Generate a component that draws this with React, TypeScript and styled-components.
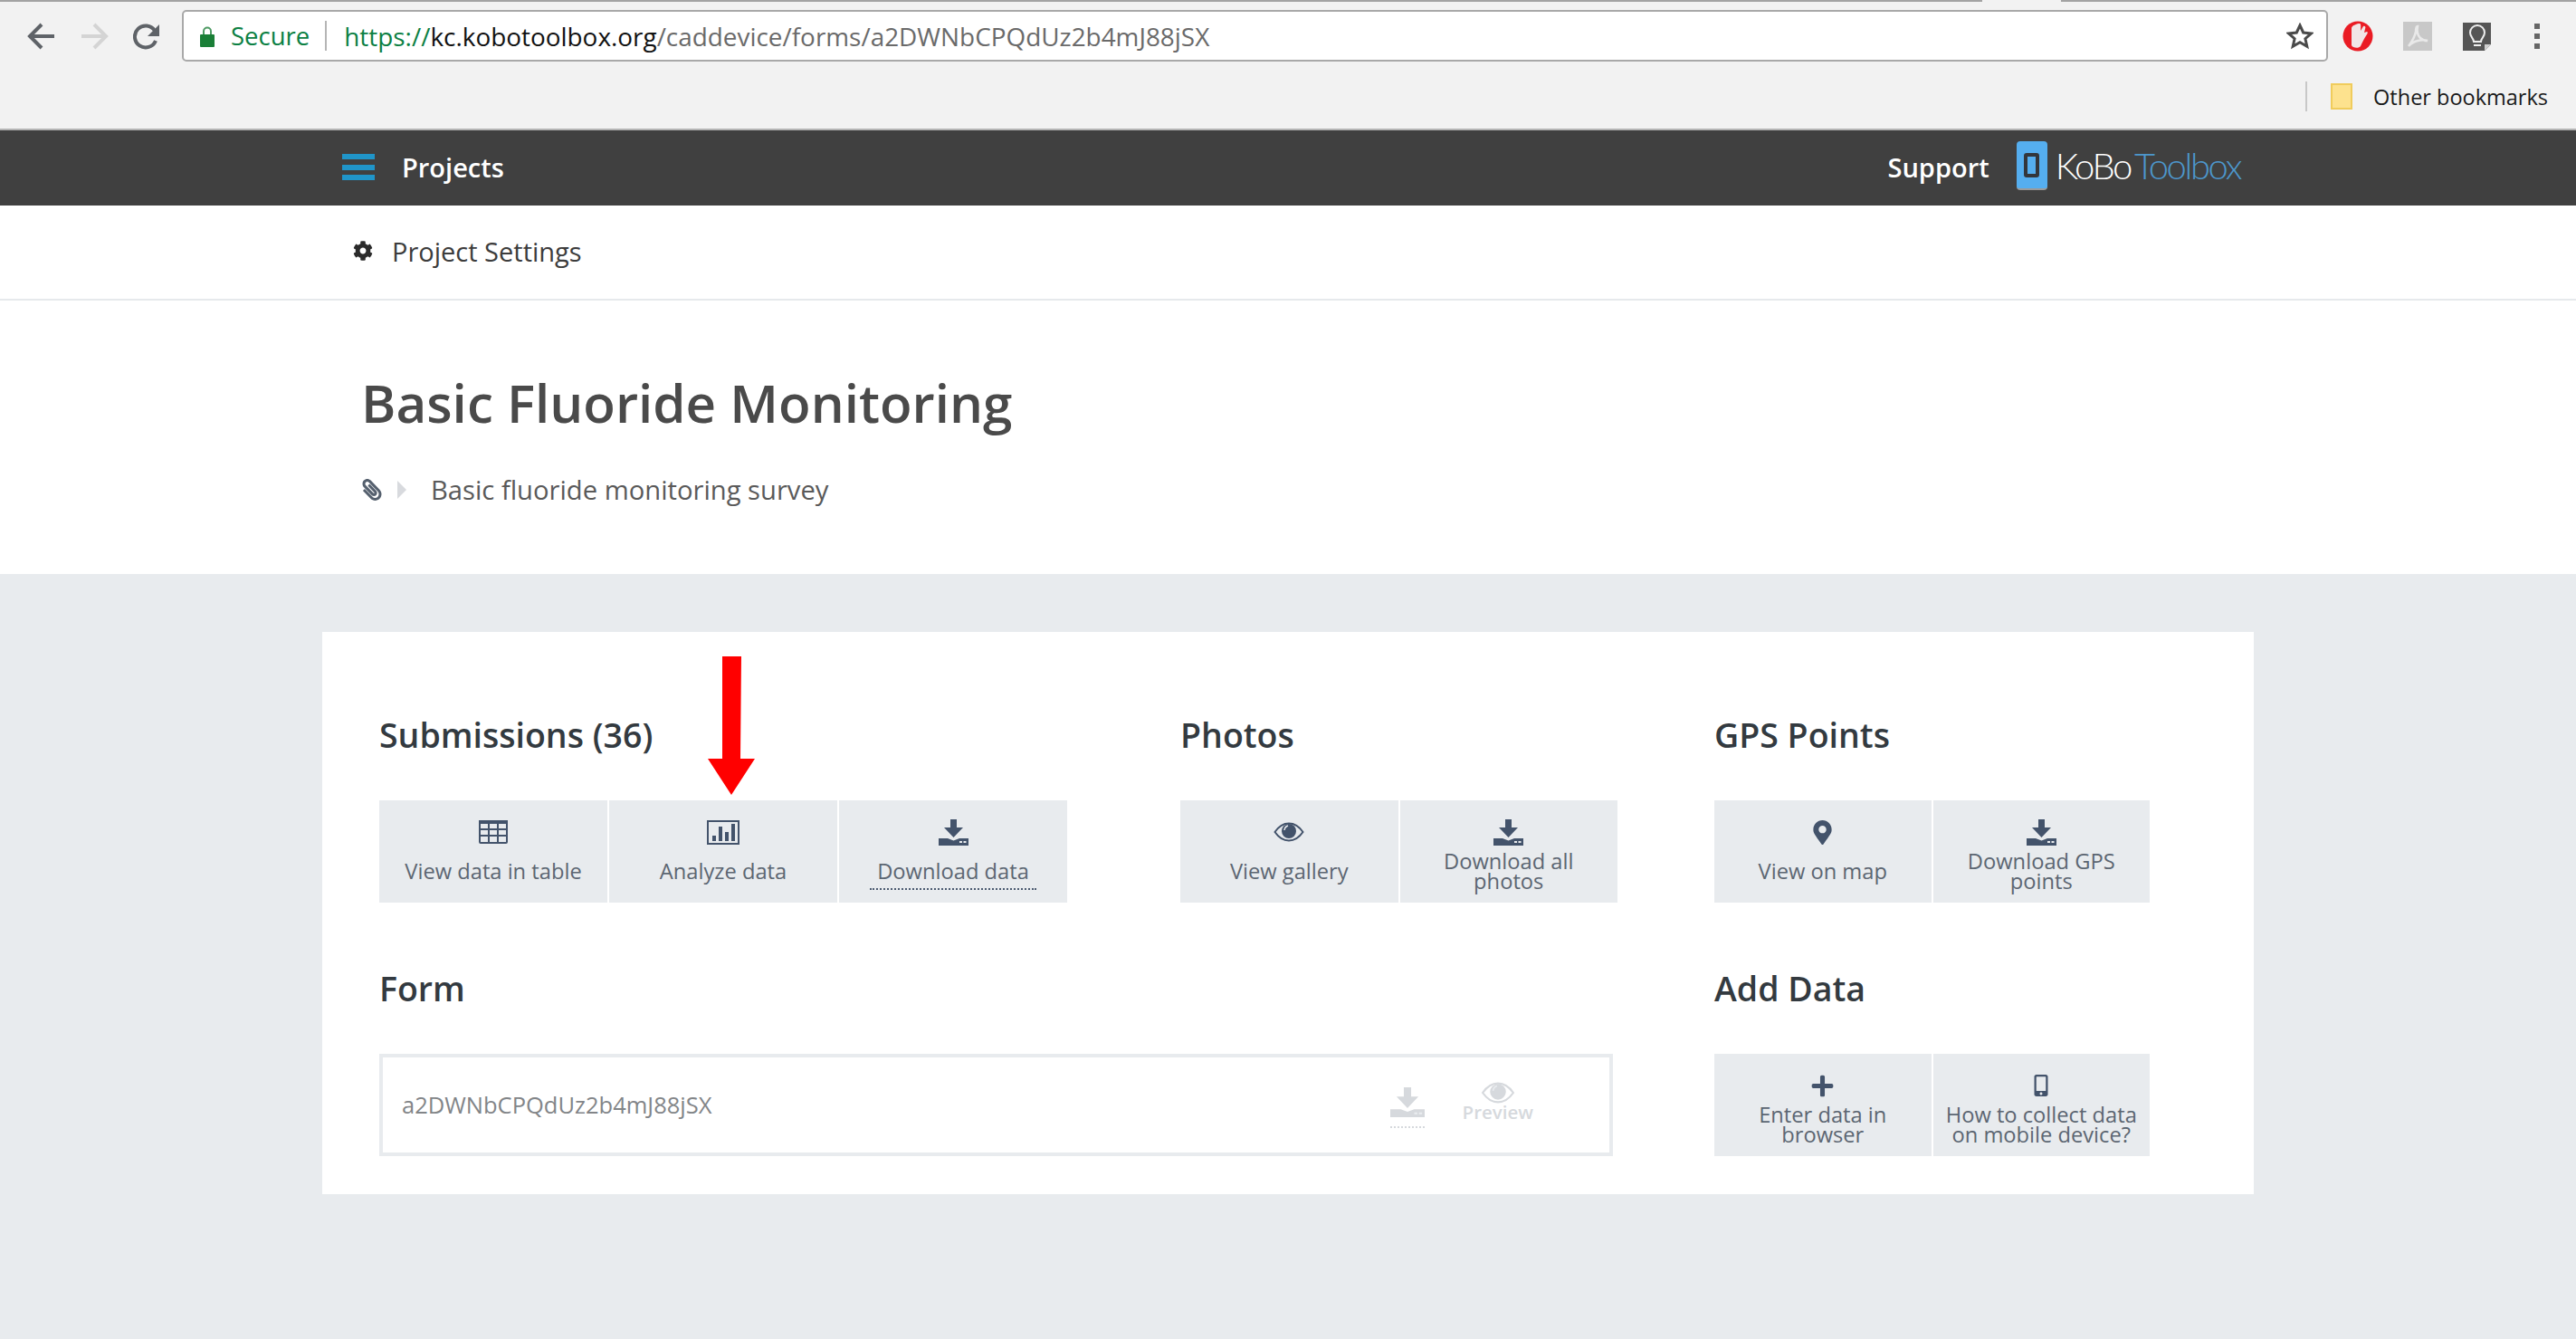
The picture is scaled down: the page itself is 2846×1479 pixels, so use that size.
import React from "react";
import styled, { createGlobalStyle } from "styled-components";
import { FaCog, FaPaperclip, FaPlus, FaMapMarkerAlt, FaMobileAlt } from "react-icons/fa";

const GlobalStyle = createGlobalStyle`
    html, body {
        margin: 0;
        padding: 0;
        background: #e8ebee;
    }
    body {
        font-family: "Open Sans", "Noto Sans", sans-serif;
    }
    * {
        box-sizing: border-box;
    }
`;

const Page = styled.div`
    width: 2846px;
    height: 1479px;
    overflow: hidden;
    display: flex;
    flex-direction: column;
    background-color: #e8ebee;
`;

/* browser chrome */
const Chrome = styled.div`
    background-color: #f2f2f2;
    border-bottom: 2px solid #b4b4b4;
    height: 144px;
`;

const TabStrip = styled.div`
    height: 2px;
    display: flex;
    background-color: #a3a3a3;
`;

const TabGap = styled.div`
    width: 87px;
    margin-left: 2190px;
    background-color: #f2f2f2;
`;

const Toolbar = styled.div`
    display: flex;
    align-items: flex-start;
    padding: 9px 10px 0 15px;
    height: 78px;
`;

const ToolSlot = styled.div<{ $w: number; $flip?: boolean }>`
    width: ${(p) => p.$w}px;
    height: 57px;
    flex: none;
    display: flex;
    align-items: center;
    justify-content: center;
    ${(p) => p.$flip && "transform: scaleX(-1);"}
`;

const UrlBox = styled.div`
    flex: 1;
    height: 57px;
    margin-left: 12px;
    display: flex;
    align-items: center;
    padding: 0 14px 0 18px;
    background-color: #ffffff;
    border: 2px solid #a9a9a9;
    border-radius: 5px;
    font-size: 27.5px;
    white-space: nowrap;
`;

const Secure = styled.span`
    color: #0b8043;
    margin-left: 18px;
`;

const UrlDivider = styled.div`
    width: 2px;
    height: 33px;
    margin: 0 19px 0 17px;
    background-color: #b5b5b5;
`;

const UrlText = styled.span`
    font-size: 27.9px;
    color: #6a6a6a;
`;

const UrlScheme = styled.span`
    color: #0b8043;
`;

const UrlHost = styled.span`
    color: #111111;
`;

const StarSlot = styled.div`
    margin-left: auto;
    display: flex;
`;

const Bookmarks = styled.div`
    height: 62px;
    display: flex;
    align-items: center;
    justify-content: flex-end;
    padding: 0 31px 9px 0;
    font-size: 23.5px;
    color: #1a1a1a;
`;

const BookmarkDivider = styled.div`
    width: 2px;
    height: 33px;
    background-color: #c8c8c8;
    margin-right: 26px;
`;

const Folder = styled.div`
    width: 24px;
    height: 29px;
    margin-right: 23px;
    background-color: #fde28e;
    border: 2px solid #f0cc5c;
`;

/* kobo nav */
const NavBar = styled.div`
    height: 83px;
    flex: none;
    display: flex;
    align-items: center;
    padding: 0 371px 2px 378px;
    background-color: #404040;
    color: #ffffff;
    font-size: 29px;
    font-weight: 600;
`;

const Hamburger = styled.div`
    width: 36px;
    height: 29px;
    margin-right: 30px;
    display: flex;
    flex-direction: column;
    justify-content: space-between;
`;

const HamburgerBar = styled.div`
    height: 6px;
    background-color: #2095c9;
`;

const SupportLink = styled.span`
    margin-left: auto;
    margin-right: 30px;
`;

const LogoBadge = styled.div`
    width: 34px;
    height: 54px;
    margin: 0 9px 3px 0;
    display: flex;
    align-items: center;
    justify-content: center;
    background-color: #55aeef;
    border-bottom: 2px solid #9a9a9a;
    border-radius: 4px;
`;

const LogoPhone = styled.div`
    width: 17px;
    height: 27px;
    border: 4px solid #33363b;
    border-radius: 3px;
`;

const LogoText = styled.div`
    margin-bottom: 3px;
    font-family: "Lato", sans-serif;
    font-weight: 300;
    font-size: 40px;
    letter-spacing: -2.4px;
    white-space: nowrap;
`;

const LogoAccent = styled.span`
    color: #4d97cc;
    margin-left: 4px;
`;

const SubNav = styled.div`
    height: 105px;
    flex: none;
    display: flex;
    align-items: center;
    padding: 0 0 3px 390px;
    background-color: #ffffff;
    border-bottom: 2px solid #e6e9ec;
    color: #3c3c3c;
    font-size: 29px;
`;

const GearIcon = styled.span`
    display: flex;
    margin-right: 21px;
    color: #2b2b2b;
`;

const Header = styled.div`
    height: 302px;
    flex: none;
    padding: 73px 0 0 399px;
    background-color: #ffffff;
`;

const Title = styled.h1`
    margin: 0;
    font-size: 58.3px;
    line-height: 80px;
    font-weight: 600;
    color: #4a4a4a;
`;

const Description = styled.div`
    display: flex;
    align-items: center;
    margin-top: 36px;
    height: 40px;
    font-size: 29.2px;
    color: #5a5a5a;
`;

const ClipIcon = styled.span`
    display: flex;
    color: #55606e;
    margin-right: 16px;
    transform: scaleX(-1);
`;

const Caret = styled.div`
    width: 0;
    height: 0;
    margin-right: 27px;
    border-style: solid;
    border-width: 10px 0 10px 10px;
    border-color: transparent transparent transparent #d8dade;
`;

/* report card */
const Body = styled.div`
    flex: 1;
    padding: 64px 356px 0 356px;
`;

const Card = styled.div`
    position: relative;
    height: 621px;
    padding: 84px 0 0 63px;
    background-color: #ffffff;
`;

const CardRow = styled.div`
    display: flex;
    margin-bottom: 65px;
`;

const Group = styled.div<{ $w: number; $gap: number }>`
    width: ${(p) => p.$w}px;
    margin-right: ${(p) => p.$gap}px;
    flex: none;
`;

const GroupTitle = styled.h2`
    margin: 0 0 42px 0;
    height: 60px;
    line-height: 60px;
    font-size: 37.5px;
    font-weight: 600;
    color: #333a40;
`;

const ButtonRow = styled.div`
    display: flex;
    gap: 2px;
`;

const ActionButton = styled.div`
    flex: 1;
    height: 113px;
    padding-top: 20px;
    display: flex;
    flex-direction: column;
    align-items: center;
    background-color: #e8ebee;
    color: #43536b;
`;

const IconSlot = styled.div`
    height: 30px;
    display: flex;
    align-items: center;
    justify-content: center;
`;

const LabelBox = styled.div`
    height: 44px;
    margin-top: 6px;
    display: flex;
    align-items: center;
    justify-content: center;
`;

const Label = styled.span<{ $underline?: boolean }>`
    display: block;
    text-align: center;
    font-size: 23.7px;
    line-height: 22px;
    color: #5c6672;
    ${(p) =>
        p.$underline &&
        `
        padding: 0 8px 8px;
        margin-bottom: -10px;
        border-bottom: 2px dotted #4b5a70;
    `}
`;

const FormBox = styled.div`
    height: 113px;
    display: flex;
    align-items: center;
    padding: 0 0 2px 21px;
    border: 4px solid #e8ebee;
    font-size: 25.5px;
    color: #828588;
`;

const FormActions = styled.div`
    margin-left: auto;
    display: flex;
    align-items: flex-start;
    color: #d6d9dd;
`;

const FormDownload = styled.div`
    width: 38px;
    padding-bottom: 10px;
    border-bottom: 2px dotted #d6d9dd;
    display: flex;
    justify-content: center;
    margin-top: 8px;
`;

const FormPreview = styled.div`
    margin: 2px 84px 0 42px;
    display: flex;
    flex-direction: column;
    align-items: center;
    font-size: 20.5px;
    line-height: 18px;
    font-weight: 600;
`;

const RedArrow = styled.svg`
    position: absolute;
    left: 426px;
    top: 27px;
`;

const Icon = styled.svg`
    display: block;
    flex: none;
`;

/* drawn icons */
function TableIcon() {
    return (
        <Icon width="32" height="26" viewBox="0 0 32 26" fill="none" stroke="currentColor" strokeWidth="2">
            <rect x="1" y="1" width="30" height="24" rx="1" />
            <rect x="0" y="0" width="32" height="4" fill="currentColor" stroke="none" />
            <path d="M11 2v22M21 2v22M1 10h30M1 17h30" />
        </Icon>
    );
}

function ChartIcon() {
    return (
        <Icon width="36" height="27" viewBox="0 0 36 27" fill="none">
            <rect x="1" y="1" width="34" height="25" stroke="currentColor" strokeWidth="2" />
            <path fill="currentColor" d="M6 17h4v6H6zM13 7h4v16h-4zM20 13h4v10h-4zM27 4h4v19h-4z" />
        </Icon>
    );
}

function DownloadIcon({ size = 33 }: { size?: number }) {
    return (
        <Icon width={size} height={(size * 29) / 33} viewBox="0 0 33 29" fill="currentColor">
            <path d="M13 0h7v9h7l-10.500 11L6 9h7z" />
            <path d="M0 21h10l6.500 2.500L23 21h10v8H0z" />
            <rect x="23" y="24" width="3" height="2" fill="#e8ebee" />
            <rect x="27.500" y="24" width="3" height="2" fill="#e8ebee" />
        </Icon>
    );
}

function EyeIcon({ w = 34, h = 22 }: { w?: number; h?: number }) {
    return (
        <Icon width={w} height={h} viewBox="0 0 34 22" fill="none">
            <path d="M1.500 11C6 4.500 11 1.500 17 1.500S28 4.500 32.500 11C28 17.500 23 20.500 17 20.500S6 17.500 1.500 11z" stroke="currentColor" strokeWidth="2" />
            <circle cx="17" cy="10" r="8" fill="currentColor" />
            <path d="M12 9a6 6 0 0 1 4-5" stroke="#e8ebee" strokeWidth="1.500" />
        </Icon>
    );
}

function LockIcon() {
    return (
        <svg width="16" height="24" viewBox="0 0 16 24">
            <path d="M4 11V6.500a4 4 0 0 1 8 0V11" fill="none" stroke="#4d9a63" strokeWidth="2" />
            <rect x="0" y="10" width="16" height="14" rx="1" fill="#1a7f37" />
        </svg>
    );
}

function BackIcon({ color }: { color: string }) {
    return (
        <svg width="30" height="30" viewBox="0 0 30 30" fill="none" stroke={color} strokeWidth="4">
            <path d="M30 15H4M16 2L3 15l13 13" />
        </svg>
    );
}

function ReloadIcon() {
    return (
        <svg width="30" height="30" viewBox="0 0 30 30" fill="none">
            <path d="M25 20a12 12 0 1 1-1-11" stroke="#5f6368" strokeWidth="4" />
            <path d="M29 2v13H16z" fill="#5f6368" />
        </svg>
    );
}

function StarIcon() {
    return (
        <svg width="30" height="30" viewBox="0 0 30 30" fill="none" stroke="#4a4a4a" strokeWidth="3">
            <path d="M15 3l3.700 8 8.800.9-6.600 5.800 1.900 8.600L15 21.800l-7.800 4.500 1.900-8.600-6.600-5.800 8.800-.9z" />
        </svg>
    );
}

function OperaIcon() {
    return (
        <svg width="34" height="34" viewBox="0 0 34 34">
            <circle cx="17" cy="17" r="16.500" fill="#ea1c24" />
            <path fill="#f1e6e6" d="M10 8c0-3 7-5 9-5s1 6 1 8l3-5c2-1 3 1 2 3l-1 4 3-1c1 0 1 2 0 3-3 4-5 9-7 13-2 3-9 2-10-1z" />
        </svg>
    );
}

function PdfIcon() {
    return (
        <svg width="32" height="32" viewBox="0 0 32 32">
            <rect width="32" height="32" fill="#c8c8c8" />
            <path d="M16 5c-1 5 0 10 3 13s5 3 8 3c-6-2-16 0-21 6 3-4 7-11 8-16 0-3 1-6 2-6z" fill="none" stroke="#e9e9e9" strokeWidth="2.500" />
        </svg>
    );
}

function NoteIcon() {
    return (
        <svg width="32" height="32" viewBox="0 0 32 32">
            <path d="M0 1h31v24l-7 7H0z" fill="#555555" />
            <path d="M24 32v-7h7z" fill="#cfcfcf" />
            <path d="M12 22c0-4-4-5-4-10a8 8 0 0 1 16 0c0 5-4 6-4 10zM12 26h8" fill="none" stroke="#eeeeee" strokeWidth="2" />
        </svg>
    );
}

function MenuIcon() {
    return (
        <svg width="6" height="28" viewBox="0 0 6 28" fill="#666666">
            <rect width="6" height="6" />
            <rect y="11" width="6" height="6" />
            <rect y="22" width="6" height="6" />
        </svg>
    );
}

function App() {
    return (
        <Page>
            <GlobalStyle />
            <Chrome>
                <TabStrip>
                    <TabGap />
                </TabStrip>
                <Toolbar>
                    <ToolSlot $w={60}>
                        <BackIcon color="#5f6368" />
                    </ToolSlot>
                    <ToolSlot $w={60} $flip>
                        <BackIcon color="#d4d4d4" />
                    </ToolSlot>
                    <ToolSlot $w={54}>
                        <ReloadIcon />
                    </ToolSlot>
                    <UrlBox>
                        <LockIcon />
                        <Secure>Secure</Secure>
                        <UrlDivider />
                        <UrlText>
                            <UrlScheme>https://</UrlScheme>
                            <UrlHost>kc.kobotoolbox.org</UrlHost>
                            /caddevice/forms/a2DWNbCPQdUz2b4mJ88jSX
                        </UrlText>
                        <StarSlot>
                            <StarIcon />
                        </StarSlot>
                    </UrlBox>
                    <ToolSlot $w={66}>
                        <OperaIcon />
                    </ToolSlot>
                    <ToolSlot $w={66}>
                        <PdfIcon />
                    </ToolSlot>
                    <ToolSlot $w={66}>
                        <NoteIcon />
                    </ToolSlot>
                    <ToolSlot $w={66}>
                        <MenuIcon />
                    </ToolSlot>
                </Toolbar>
                <Bookmarks>
                    <BookmarkDivider />
                    <Folder />
                    Other bookmarks
                </Bookmarks>
            </Chrome>

            <NavBar>
                <Hamburger>
                    <HamburgerBar />
                    <HamburgerBar />
                    <HamburgerBar />
                </Hamburger>
                Projects
                <SupportLink>Support</SupportLink>
                <LogoBadge>
                    <LogoPhone />
                </LogoBadge>
                <LogoText>
                    KoBo<LogoAccent>Toolbox</LogoAccent>
                </LogoText>
            </NavBar>

            <SubNav>
                <GearIcon>
                    <FaCog size={22} />
                </GearIcon>
                Project Settings
            </SubNav>

            <Header>
                <Title>Basic Fluoride Monitoring</Title>
                <Description>
                    <ClipIcon>
                        <FaPaperclip size={24} />
                    </ClipIcon>
                    <Caret />
                    Basic fluoride monitoring survey
                </Description>
            </Header>

            <Body>
                <Card>
                    <RedArrow width="52" height="153" viewBox="0 0 52 153">
                        <path fill="#ff0000" d="M16 0h21l-1 113h16l-26 40L0 113h16z" />
                    </RedArrow>
                    <CardRow>
                        <Group $w={760} $gap={125}>
                            <GroupTitle>Submissions (36)</GroupTitle>
                            <ButtonRow>
                                <ActionButton>
                                    <IconSlot>
                                        <TableIcon />
                                    </IconSlot>
                                    <LabelBox>
                                        <Label>View data in table</Label>
                                    </LabelBox>
                                </ActionButton>
                                <ActionButton>
                                    <IconSlot>
                                        <ChartIcon />
                                    </IconSlot>
                                    <LabelBox>
                                        <Label>Analyze data</Label>
                                    </LabelBox>
                                </ActionButton>
                                <ActionButton>
                                    <IconSlot>
                                        <DownloadIcon />
                                    </IconSlot>
                                    <LabelBox>
                                        <Label $underline>Download data</Label>
                                    </LabelBox>
                                </ActionButton>
                            </ButtonRow>
                        </Group>
                        <Group $w={483} $gap={107}>
                            <GroupTitle>Photos</GroupTitle>
                            <ButtonRow>
                                <ActionButton>
                                    <IconSlot>
                                        <EyeIcon />
                                    </IconSlot>
                                    <LabelBox>
                                        <Label>View gallery</Label>
                                    </LabelBox>
                                </ActionButton>
                                <ActionButton>
                                    <IconSlot>
                                        <DownloadIcon />
                                    </IconSlot>
                                    <LabelBox>
                                        <Label>
                                            Download all
                                            <br />
                                            photos
                                        </Label>
                                    </LabelBox>
                                </ActionButton>
                            </ButtonRow>
                        </Group>
                        <Group $w={481} $gap={0}>
                            <GroupTitle>GPS Points</GroupTitle>
                            <ButtonRow>
                                <ActionButton>
                                    <IconSlot>
                                        <FaMapMarkerAlt size={27} />
                                    </IconSlot>
                                    <LabelBox>
                                        <Label>View on map</Label>
                                    </LabelBox>
                                </ActionButton>
                                <ActionButton>
                                    <IconSlot>
                                        <DownloadIcon />
                                    </IconSlot>
                                    <LabelBox>
                                        <Label>
                                            Download GPS
                                            <br />
                                            points
                                        </Label>
                                    </LabelBox>
                                </ActionButton>
                            </ButtonRow>
                        </Group>
                    </CardRow>
                    <CardRow>
                        <Group $w={1363} $gap={112}>
                            <GroupTitle>Form</GroupTitle>
                            <FormBox>
                                a2DWNbCPQdUz2b4mJ88jSX
                                <FormActions>
                                    <FormDownload>
                                        <DownloadIcon size={38} />
                                    </FormDownload>
                                    <FormPreview>
                                        <EyeIcon w={38} h={24} />
                                        Preview
                                    </FormPreview>
                                </FormActions>
                            </FormBox>
                        </Group>
                        <Group $w={481} $gap={0}>
                            <GroupTitle>Add Data</GroupTitle>
                            <ButtonRow>
                                <ActionButton>
                                    <IconSlot>
                                        <FaPlus size={27} />
                                    </IconSlot>
                                    <LabelBox>
                                        <Label>
                                            Enter data in
                                            <br />
                                            browser
                                        </Label>
                                    </LabelBox>
                                </ActionButton>
                                <ActionButton>
                                    <IconSlot>
                                        <FaMobileAlt size={24} />
                                    </IconSlot>
                                    <LabelBox>
                                        <Label>
                                            How to collect data
                                            <br />
                                            on mobile device?
                                        </Label>
                                    </LabelBox>
                                </ActionButton>
                            </ButtonRow>
                        </Group>
                    </CardRow>
                </Card>
            </Body>
        </Page>
    );
}

export default App;
